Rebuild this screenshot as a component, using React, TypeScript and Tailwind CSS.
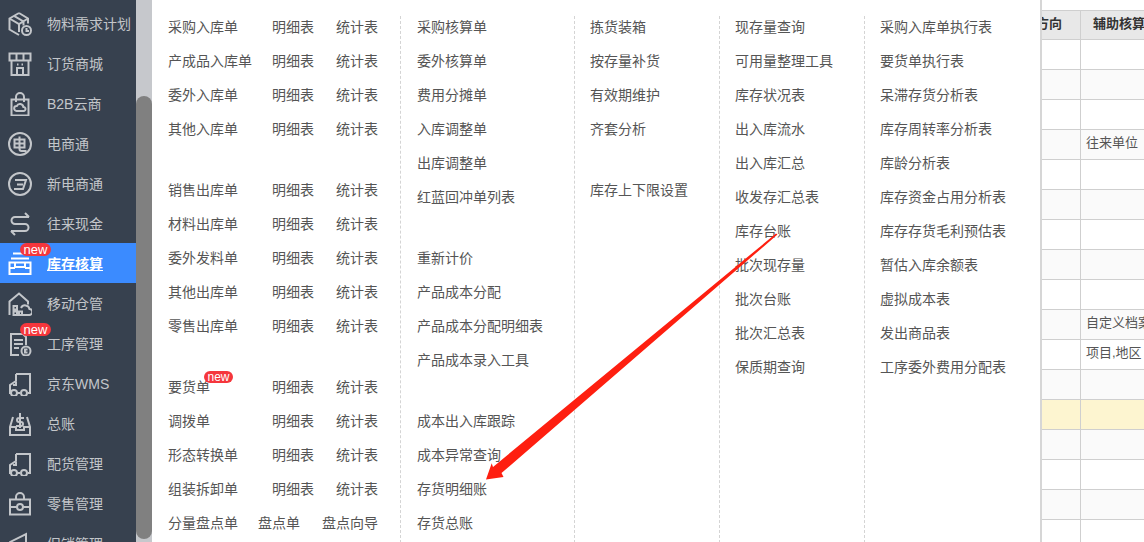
import React from 'react';

const FONT = '"Liberation Sans", "Noto Sans CJK SC", sans-serif';

// sidebar icons, drawn by hand on a 24 box
const icons: Record<string, React.ReactNode> = {
    plan: (
        <>
            <path d="M11 1 1.500 6.500v11L11 23" />
            <path d="M11 1l9 5.500v5" />
            <path d="M1.500 6.500l9.500 5.500 9-5.500M11 12v8M6 3.800l9.500 5.700v4" />
            <circle cx="18.500" cy="18.500" r="4.500" />
            <path d="M18.500 16v3h2.500" />
        </>
    ),
    shop: (
        <>
            <path d="M1.500 1.500h21v7h-21zM8.500 1.500v7M15.500 1.500v7" />
            <path d="M3.500 8.500v14.500h17V8.500" />
            <path d="M9 23v-7h6v7M9 12.500h1.500M13.500 12.500H15" />
        </>
    ),
    bag: (
        <>
            <path d="M3.500 7.500h17v16h-17z" />
            <path d="M8 10V5a4 4 0 0 1 8 0v5" />
            <path d="M8.500 19a2.500 2.500 0 0 1 .3-5 3.500 3.500 0 0 1 6.600 1 2 2 0 0 1 .2 4z" />
        </>
    ),
    dian: (
        <>
            <circle cx="12" cy="12" r="11" />
            <path d="M6.500 7.500h10v8h-10zM6.500 11.500h10M11.500 4.500V17q0 2 2 2h5" />
        </>
    ),
    xin: (
        <>
            <circle cx="12" cy="12" r="11" />
            <path d="M7 8h11l-3 9H6M9 12.500h6" />
        </>
    ),
    swap: (
        <>
            <path d="M21 5H7a3.500 3.500 0 0 0 0 7h10a3.500 3.500 0 0 1 0 7H3" />
            <path d="M17 1l4 4M7 23l-4-4" />
        </>
    ),
    stock: (
        <>
            <path d="M5 1.500h14M3 6.500h18" />
            <path d="M1.500 10.500h21V22h-21zM7 10.500V15h10v-4.500" />
            <path d="M1.500 16H7M17 16h5.500" />
        </>
    ),
    ware: (
        <>
            <path d="M1.500 23V9.500L11 1.500l9 8v3" />
            <path d="M5.500 14h3.500v3.500H5.500zM5.500 19.500h3.500V23H5.500zM11 19.500h3V23h-3z" />
            <path d="M13 23h8a3 3 0 0 0 .5-6 4.500 4.500 0 0 0-8.500-1" />
        </>
    ),
    doc: (
        <>
            <path d="M11 23H3V2h12l3 3v8" />
            <path d="M6 8h9M6 12h9M6 16h5" />
            <circle cx="18" cy="19" r="4.500" />
            <path d="M19.500 17.500H17v3h2.500" />
        </>
    ),
    truck: (
        <>
            <path d="M8 2h14v19h-2M12 21H9" />
            <path d="M8 2v7l-6 4v8h1" />
            <circle cx="6" cy="21" r="3" />
            <circle cx="16" cy="21" r="3" />
            <path d="M5 13h3v-3" />
        </>
    ),
    ledger: (
        <>
            <path d="M5 5l-3 10v8h20v-8l-3-10" />
            <path d="M2 15h6v3h8v-3h6" />
            <path d="M16 6h-5a2 2 0 0 0 0 4h2a2 2 0 0 1 0 4H8M12 1v15" />
        </>
    ),
    lock: (
        <>
            <path d="M2 7.500h20v15H2z" />
            <path d="M8 7.500V5a4 4 0 0 1 8 0v2.500" />
            <circle cx="12" cy="15" r="3" />
            <path d="M2 15h7M15 15h7" />
        </>
    ),
    promo: (
        <>
            <path d="M2 23V10l16-8v21" />
            <path d="M7 14h6" />
        </>
    ),
};

const NAV = [
    { name: '物料需求计划', icon: 'plan' },
    { name: '订货商城', icon: 'shop' },
    { name: 'B2B云商', icon: 'bag' },
    { name: '电商通', icon: 'dian' },
    { name: '新电商通', icon: 'xin' },
    { name: '往来现金', icon: 'swap' },
    { name: '库存核算', icon: 'stock', active: true, badge: true },
    { name: '移动仓管', icon: 'ware' },
    { name: '工序管理', icon: 'doc', badge: true },
    { name: '京东WMS', icon: 'truck' },
    { name: '总账', icon: 'ledger' },
    { name: '配货管理', icon: 'truck' },
    { name: '零售管理', icon: 'lock' },
    { name: '促销管理', icon: 'promo' },
];

const bills = (names: string[]) => names.map((n) => [n, '明细表', '统计表']);

const GROUP_A = [
    bills(['采购入库单', '产成品入库单', '委外入库单', '其他入库单']),
    bills(['销售出库单', '材料出库单', '委外发料单', '其他出库单', '零售出库单']),
];

const GROUP_B = bills(['要货单', '调拨单', '形态转换单', '组装拆卸单']);

const COL_2 = [
    ['采购核算单', '委外核算单', '费用分摊单', '入库调整单', '出库调整单', '红蓝回冲单列表'],
    ['重新计价', '产品成本分配', '产品成本分配明细表', '产品成本录入工具'],
    ['成本出入库跟踪', '成本异常查询', '存货明细账', '存货总账'],
];

const COL_3 = [['拣货装箱', '按存量补货', '有效期维护', '齐套分析'], ['库存上下限设置']];

const COL_4 = [
    ['现存量查询', '可用量整理工具', '库存状况表', '出入库流水', '出入库汇总', '收发存汇总表', '库存台账', '批次现存量', '批次台账', '批次汇总表', '保质期查询'],
];

const COL_5 = [
    ['采购入库单执行表', '要货单执行表', '呆滞存货分析表', '库存周转率分析表', '库龄分析表', '库存资金占用分析表', '库存存货毛利预估表', '暂估入库余额表', '虚拟成本表', '发出商品表', '工序委外费用分配表'],
];

// rows under the header, index 12 is the highlighted one
const ROWS: { text?: string; odd: boolean; hi?: boolean }[] = [
    { odd: false },
    { odd: true },
    { odd: false },
    { odd: true, text: '往来单位' },
    { odd: false },
    { odd: true },
    { odd: false },
    { odd: true },
    { odd: false },
    { odd: true, text: '自定义档案' },
    { odd: false, text: '项目,地区' },
    { odd: true },
    { odd: false, hi: true },
    { odd: true },
    { odd: false },
    { odd: true },
    { odd: false },
];

function NewBadge({ className }: { className: string }) {
    return (
        <span className={`absolute flex items-center justify-center rounded-full bg-[#f5363c] text-white ${className}`}>
            new
        </span>
    );
}

function Sidebar() {
    return (
        <div className="w-[136px] h-full shrink-0 bg-[#37414f] pt-[3px] overflow-hidden">
            {NAV.map((item) => (
                <div
                    key={item.name}
                    className={`relative h-[40px] flex items-center pl-[8px] pt-[2px] ${item.active ? 'bg-[#3b8bff] text-white' : 'text-[#c3c6ca]'}`}
                >
                    <svg
                        viewBox="0 0 24 24"
                        width="24"
                        height="24"
                        fill="none"
                        stroke="currentColor"
                        strokeWidth="2"
                        className="shrink-0"
                    >
                        {icons[item.icon]}
                    </svg>
                    <span className={`ml-[15px] text-[14px] leading-none whitespace-nowrap ${item.active ? 'font-bold underline' : ''}`}>
                        {item.name}
                    </span>
                    {item.badge && <NewBadge className="left-[20px] top-[0px] w-[31px] h-[13px] text-[13px] leading-none" />}
                </div>
            ))}
        </div>
    );
}

function LinkRow({ cells }: { cells: string[] }) {
    const isCount = cells[0] === '分量盘点单';
    return (
        <div className="relative h-[34px] flex items-center whitespace-nowrap">
            <span className="w-[104px]">{cells[0]}</span>
            <span className={isCount ? 'w-[64px] -ml-[14px]' : 'w-[64px]'}>{cells[1]}</span>
            <span>{cells[2]}</span>
            {cells[0] === '要货单' && (
                <NewBadge className="left-[36px] top-[1px] w-[29px] h-[12px] text-[12px] leading-none" />
            )}
        </div>
    );
}

function PlainColumn({ groups, className }: { groups: string[][]; className: string }) {
    return (
        <div className={`h-[532px] whitespace-nowrap ${className}`}>
            <div className="-mt-[6px]">
                {groups.map((g, i) => (
                    <div key={i} className={i > 0 ? 'mt-[27px]' : ''}>
                        {g.map((t) => (
                            <div key={t} className="h-[34px] flex items-center">
                                {t}
                            </div>
                        ))}
                    </div>
                ))}
            </div>
        </div>
    );
}

function MenuPanel() {
    return (
        <div className="relative w-[888px] h-full shrink-0 bg-white overflow-hidden text-[14px] text-[#555555] pt-[16px] flex items-start">
            <div className="w-[248px] h-[526px] pl-[16px]">
                <div className="-mt-[6px]">
                    {GROUP_A.map((g, i) => (
                        <div key={i} className={i > 0 ? 'mt-[27px]' : ''}>
                            {g.map((c) => (
                                <LinkRow key={c[0]} cells={c} />
                            ))}
                        </div>
                    ))}
                    <div className="mt-[27px]">
                        {GROUP_B.map((c) => (
                            <LinkRow key={c[0]} cells={c} />
                        ))}
                        <LinkRow cells={['分量盘点单', '盘点单', '盘点向导']} />
                    </div>
                </div>
            </div>
            <PlainColumn groups={COL_2} className="w-[174px] pl-[16px] border-l border-dashed border-[#d4d4d4]" />
            <PlainColumn groups={COL_3} className="w-[145px] pl-[15px] border-l border-dashed border-[#d4d4d4]" />
            <PlainColumn groups={COL_4} className="w-[145px] pl-[15px] border-l border-dashed border-[#d4d4d4]" />
            <PlainColumn groups={COL_5} className="flex-1 pl-[15px] border-l border-dashed border-[#d4d4d4]" />

            {/* red annotation arrow drawn over the menu */}
            <svg className="absolute left-[320px] top-[220px]" width="320" height="270" viewBox="472 220 320 270">
                <polygon
                    points="777.5,234.5 776,233.5 493,467 491.7,463.3 486,479.5 503.5,477 501.500,473"
                    fill="#fe1f10"
                />
            </svg>
        </div>
    );
}

function DataTable() {
    return (
        <div className="flex-1 h-full min-w-0 bg-white border-l-[2px] border-[#d6d6d6] overflow-hidden text-[13px] text-[#555555] pt-[10px]">
            <div className="flex h-[30px] bg-[#e8e8e8] border-y border-[#cfcfcf] font-bold text-[#333333] whitespace-nowrap">
                <div className="w-[39px] shrink-0 border-r border-[#cfcfcf] flex items-center justify-end pr-[18px] pb-[2px] overflow-hidden">
                    方向
                </div>
                <div className="flex-1 flex items-center pl-[12px] pb-[2px] overflow-hidden">辅助核算</div>
            </div>
            {ROWS.map((r, i) => (
                <div
                    key={i}
                    className={`flex h-[30px] border-b border-[#cfcfcf] ${r.hi ? 'bg-[#fdf5d0]' : r.odd ? 'bg-[#fafafa]' : 'bg-white'}`}
                >
                    <div className="w-[39px] shrink-0 border-r border-[#cfcfcf]" />
                    <div className="flex-1 flex items-center pl-[5px] pb-[4px] overflow-hidden whitespace-nowrap">{r.text}</div>
                </div>
            ))}
        </div>
    );
}

export default function App() {
    return (
        <div className="flex w-[1144px] h-[542px] overflow-hidden bg-white" style={{ fontFamily: FONT }}>
            <Sidebar />
            {/* page scrollbar */}
            <div className="w-[16px] h-full shrink-0 bg-[#c6c8cc] pt-[96px]">
                <div className="h-[443px] rounded-[8px] bg-[#808080]" />
            </div>
            <MenuPanel />
            <DataTable />
        </div>
    );
}
